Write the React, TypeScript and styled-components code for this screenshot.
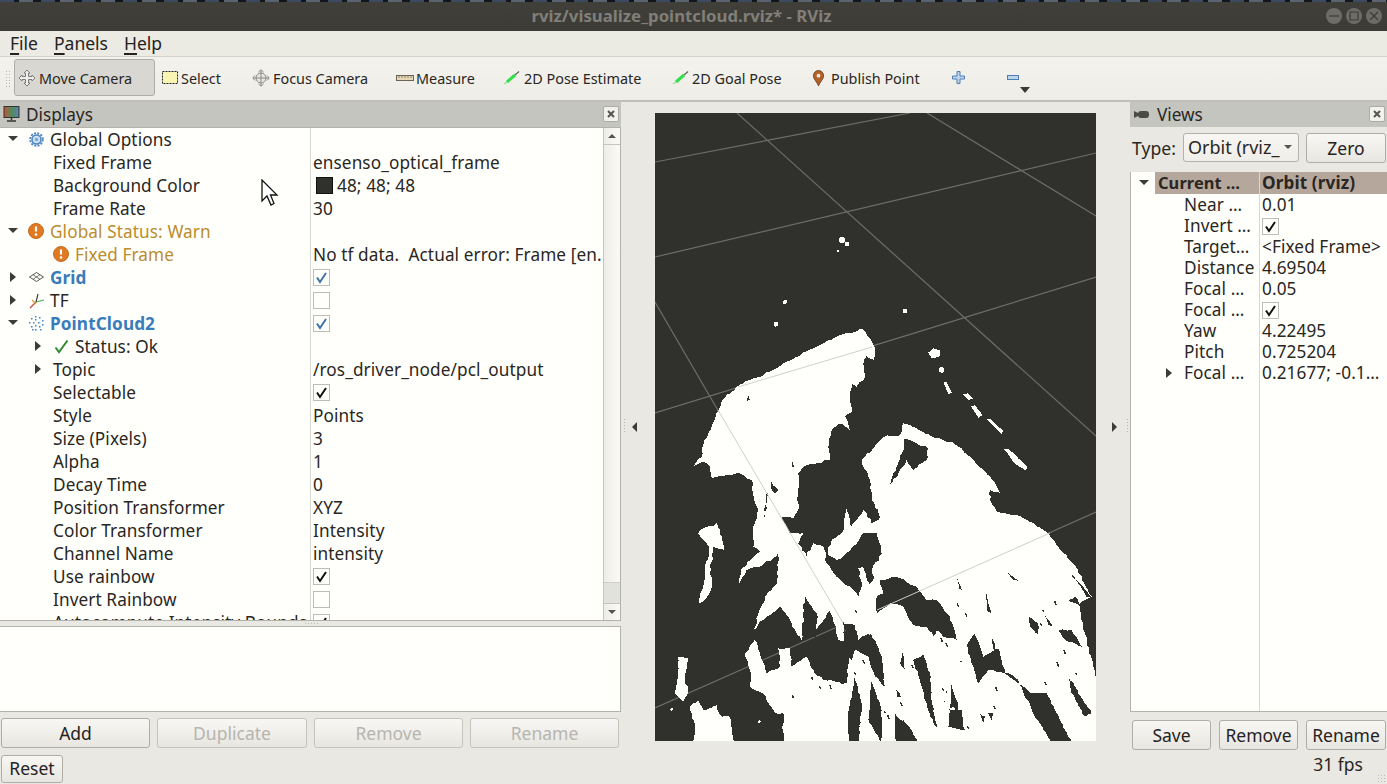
import React from "react";
import styled, { createGlobalStyle } from "styled-components";

const Global = createGlobalStyle`
  html, body { margin: 0; padding: 0; height: 100%; background: #e9e8e2; overflow: hidden; }
  * { box-sizing: border-box; }
  #root { font-family: "Noto Sans", "Open Sans", sans-serif; color: #2a2622; }
`;

const Screen = styled.div`
  position: relative;
  width: 1387px;
  height: 784px;
  display: flex;
  flex-direction: column;
  background: #e9e8e2;
  overflow: hidden;
`;

const TitleBar = styled.div`
  position: relative;
  height: 31px;
  flex: none;
  display: flex;
  align-items: center;
  justify-content: center;
  padding: 2px 24px 2px 0;
  background: linear-gradient(#403f3a, #3c3b36);
  color: #807f79;
  font-size: 16.8px;
  font-weight: 700;
  &::before {
    content: "";
    position: absolute;
    left: 0;
    right: 0;
    top: 0;
    height: 2px;
    background: #12151a repeating-linear-gradient(90deg, #3b4a5e 0 14px, #12151a 14px 19px, #5a6470 19px 33px, #12151a 33px 41px);
  }
`;

const WindowButtons = styled.div`
  position: absolute;
  right: 5px;
  top: 8px;
  display: flex;
  gap: 4px;
`;

const WindowButton = styled.span`
  width: 16px;
  height: 16px;
  border-radius: 50%;
  background: #6d6c67;
  display: flex;
  align-items: center;
  justify-content: center;
`;

const MenuBar = styled.div`
  height: 26px;
  flex: none;
  display: flex;
  align-items: center;
  padding: 0 0 2px 10px;
  gap: 16px;
  background: #ebeae3;
  border-bottom: 1px solid #d3d2cb;
  font-size: 17.5px;
`;

const MenuItem = styled.span`
  color: #26221e;
  u { text-decoration-thickness: 2px; text-underline-offset: 3px; }
`;

const ToolBar = styled.div`
  height: 45px;
  flex: none;
  display: flex;
  align-items: center;
  padding: 0 0 2px 14px;
  position: relative;
  background: linear-gradient(#f3f2ed, #eeede7);
  border-bottom: 2px solid #c0bfb8;
  font-size: 14.4px;
`;

const Grip = styled.span`
  position: absolute;
  left: 5px;
  top: 13px;
  width: 5px;
  height: 19px;
  background-image: radial-gradient(#b8b7b0 0.8px, transparent 1px);
  background-size: 3px 3px;
`;

const Tool = styled.div<{ $w: number; $on?: boolean; $gap: number }>`
  width: ${(p) => p.$w}px;
  height: 37px;
  display: flex;
  align-items: center;
  gap: ${(p) => p.$gap}px;
  padding-left: ${(p) => (p.$on ? 3 : 6)}px;
  white-space: nowrap;
  border-radius: 3px;
  background: ${(p) => (p.$on ? "#d9d7d1" : "transparent")};
  border: ${(p) => (p.$on ? "1px solid #aeada6" : "none")};
  > span { padding-top: 2px; }
`;

const ToolMenuArrow = styled.span`
  position: absolute;
  left: 1020px;
  top: 30px;
  width: 0;
  height: 0;
  border: 5px solid transparent;
  border-top: 6px solid #3a3935;
  border-bottom: none;
`;

const Main = styled.div`
  height: 650px;
  flex: none;
  display: grid;
  grid-template-columns: 621px 509px 257px;
`;

const Panel = styled.section`
  display: flex;
  flex-direction: column;
  min-width: 0;
`;

const PanelTitle = styled.header`
  height: 25px;
  flex: none;
  display: flex;
  align-items: center;
  justify-content: space-between;
  padding: 0 2px 1px 3px;
  background: #c5c5c0;
  font-size: 17.2px;
  color: #2a2622;
`;

const PanelName = styled.span<{ $gap: number }>`
  display: flex;
  align-items: center;
  gap: ${(p) => p.$gap}px;
`;

const CloseBox = styled.span`
  width: 16px;
  height: 16px;
  display: flex;
  align-items: center;
  justify-content: center;
  background: #f2f1ec;
  border: 1px solid #acaba4;
  border-radius: 2px;
`;

const DisplayTree = styled.div`
  height: 494px;
  flex: none;
  display: flex;
  background: #fffffc;
  border: 1px solid #b3b2ab;
  border-left: none;
`;

const DisplayRows = styled.div`
  flex: 1;
  position: relative;
  overflow: hidden;
  font-size: 17.2px;
  line-height: 21px;
  letter-spacing: 0.1px;
  &::after {
    content: "";
    position: absolute;
    left: 310px;
    top: 0;
    bottom: 0;
    width: 1px;
    background: #d8d7d2;
  }
`;

const TreeRow = styled.div<{ $h: number; $name: number }>`
  height: ${(p) => p.$h}px;
  display: grid;
  grid-template-columns: ${(p) => p.$name}px 1fr;
  align-items: center;
  white-space: pre;
  padding-bottom: 1px;
`;

const NameCell = styled.div<{ $depth: number; $color?: string; $bold?: boolean; $base: number; $step: number }>`
  display: flex;
  align-items: center;
  min-width: 0;
  overflow-x: clip;
  padding-left: ${(p) => p.$base + p.$depth * p.$step}px;
  color: ${(p) => p.$color || "inherit"};
  font-weight: ${(p) => (p.$bold ? 700 : 400)};
`;

const Expander = styled.span<{ $kind?: "open" | "closed" }>`
  width: 10px;
  height: 10px;
  flex: none;
  position: relative;
  &::before {
    content: "";
    display: ${(p) => (p.$kind ? "block" : "none")};
    position: absolute;
    width: 0;
    height: 0;
    ${(p) =>
      p.$kind === "open"
        ? `left: 0; top: 2px; border-left: 5px solid transparent; border-right: 5px solid transparent; border-top: 5px solid #3c3b37;`
        : `left: 2px; top: 0; border-top: 5px solid transparent; border-bottom: 5px solid transparent; border-left: 6px solid #3c3b37;`}
  }
`;

const RowIcon = styled.span`
  width: 20px;
  height: 18px;
  margin-left: 8px;
  flex: none;
  display: flex;
  align-items: center;
  justify-content: center;
`;

const RowLabel = styled.span<{ $icon: boolean }>`
  margin-left: ${(p) => (p.$icon ? 4 : 10)}px;
`;

const ValueCell = styled.div`
  display: flex;
  align-items: center;
  padding-left: 3px;
  min-width: 0;
  overflow-x: clip;
`;

const Swatch = styled.span<{ $c: string }>`
  width: 17px;
  height: 17px;
  margin: 0 4px 0 3px;
  background: ${(p) => p.$c};
  border: 1px solid #111;
  flex: none;
`;

const Check = styled.span`
  width: 17px;
  height: 17px;
  margin-top: 1px;
  flex: none;
  display: flex;
  align-items: center;
  justify-content: center;
  background: #fffffc;
  border: 1px solid #bdbcb6;
`;

const ScrollBar = styled.div`
  width: 17px;
  flex: none;
  display: flex;
  flex-direction: column;
  border-left: 1px solid #c5c4be;
  background: linear-gradient(90deg, #eeede8, #fbfaf7);
`;

const ScrollButton = styled.span`
  height: 17px;
  flex: none;
  display: flex;
  align-items: center;
  justify-content: center;
  &:first-child { border-bottom: 1px solid #c5c4be; }
  &:last-child { border-top: 1px solid #c5c4be; }
`;

const ScrollTrack = styled.div`
  flex: 1;
  display: flex;
  flex-direction: column;
  justify-content: flex-end;
`;

const ScrollThumb = styled.div`
  height: 21px;
  background: #e2e2dd;
  border-top: 1px solid #cfcec8;
`;

const Tri = styled.span<{ $up?: boolean }>`
  width: 0;
  height: 0;
  border-left: 4px solid transparent;
  border-right: 4px solid transparent;
  ${(p) => (p.$up ? "border-bottom: 4px solid #55544f;" : "border-top: 4px solid #55544f;")}
`;

const Splitter = styled.div`
  height: 5px;
  flex: none;
  position: relative;
  &::after {
    content: "";
    position: absolute;
    left: 304px;
    top: 1px;
    width: 15px;
    height: 3px;
    background-image: radial-gradient(#bcbbb4 0.7px, transparent 0.9px);
    background-size: 3px 3px;
  }
`;

const HelpBox = styled.div`
  height: 86px;
  flex: none;
  background: #fffffc;
  border: 1px solid #b3b2ab;
  border-left: none;
`;

const ButtonRow = styled.div<{ $pad: string; $gap: number }>`
  display: flex;
  flex: none;
  gap: ${(p) => p.$gap}px;
  padding: ${(p) => p.$pad};
`;

const Button = styled.button<{ $w: number }>`
  width: ${(p) => p.$w}px;
  height: 30px;
  padding: 0 0 1px;
  flex: none;
  font: inherit;
  font-size: 17.5px;
  color: #26221e;
  background: linear-gradient(#f8f7f4, #e7e6e0);
  border: 1px solid #aeada6;
  border-radius: 3px;
  &:disabled {
    color: #b6b5af;
    border-color: #c4c3bc;
  }
`;

const Center = styled.div`
  display: grid;
  grid-template-columns: 34px 441px 34px;
  grid-template-rows: 628px;
  padding-top: 11px;
`;

const SideArrow = styled.div<{ $left?: boolean }>`
  position: relative;
  display: flex;
  align-items: center;
  padding-left: ${(p) => (p.$left ? 11 : 16)}px;
  &::before {
    content: "";
    width: 0;
    height: 0;
    border-top: 5px solid transparent;
    border-bottom: 5px solid transparent;
    ${(p) => (p.$left ? "border-right: 5px solid #3c3b37;" : "border-left: 5px solid #3c3b37;")}
  }
  &::after {
    content: "";
    position: absolute;
    ${(p) => (p.$left ? "left: 2px;" : "right: 1px;")}
    top: 305px;
    width: 3px;
    height: 16px;
    background-image: radial-gradient(#b5b4ad 0.7px, transparent 0.9px);
    background-size: 3px 3px;
  }
`;

const Viewport = styled.div`
  width: 441px;
  height: 628px;
  background: #30302c;
  overflow: hidden;
  svg { display: block; }
`;

const TypeRow = styled.div`
  height: 45px;
  flex: none;
  display: flex;
  align-items: flex-start;
  padding: 6px 1px 0 2px;
  font-size: 17.6px;
`;

const TypeLabel = styled.span`
  width: 51px;
  line-height: 31px;
`;

const Combo = styled.div`
  width: 116px;
  height: 29px;
  display: flex;
  align-items: center;
  justify-content: space-between;
  padding: 0 6px 2px 4px;
  background: linear-gradient(#f7f6f3, #efeee9);
  border: 1px solid #b3b2ab;
  border-radius: 3px;
  margin-right: 7px;
  white-space: nowrap;
  font-size: 18px;
`;

const ViewTree = styled.div`
  height: 540px;
  flex: none;
  position: relative;
  overflow: hidden;
  background: #fffffc;
  border-left: 1px solid #b3b2ab;
  border-bottom: 1px solid #b3b2ab;
  font-size: 17.2px;
  line-height: 20px;
  letter-spacing: 0.1px;
  &::after {
    content: "";
    position: absolute;
    left: 128px;
    top: 0;
    bottom: 0;
    width: 1px;
    background: #d8d7d2;
  }
`;

const HeaderName = styled.span`
  margin-left: 6px;
  flex: 1;
  align-self: stretch;
  display: flex;
  align-items: center;
  padding: 0 0 1px 3px;
  background: #b6a79d;
  font-size: 16.4px;
`;

const HeaderRow = styled.div`
  height: 22px;
  margin-bottom: 1px;
  display: grid;
  grid-template-columns: 128px 1fr;
  font-weight: 700;
  white-space: nowrap;
  > div:first-child { display: flex; align-items: center; padding-left: 8px; }
  > div:last-child { display: flex; align-items: center; padding: 0 0 1px 3px; background: #b6a79d; }
`;

const StatusBar = styled.div`
  height: 32px;
  flex: none;
  position: relative;
  display: flex;
  align-items: center;
  justify-content: space-between;
  padding: 1px 24px 0 1px;
  font-size: 17.5px;
`;

const Fps = styled.span`
  margin-bottom: 10px;
`;

const ResetButton = styled(Button)`
  height: 28px;
`;

const SizeGrip = styled.span`
  position: absolute;
  right: 0;
  bottom: 0;
  width: 10px;
  height: 10px;
  background-image: radial-gradient(#bcbbb4 0.8px, transparent 1px);
  background-size: 3px 3px;
`;

const PointerLayer = styled.svg`
  position: absolute;
  left: 260px;
  top: 179px;
`;

/* ---------- icons ---------- */

const MoveIcon = () => (
  <svg width="18" height="18" viewBox="0 0 18 18" fill="#eee" stroke="#7d7d78" strokeWidth="1">
    <path d="M9 1 L12 4 L10.5 4 L10.5 7.5 L14 7.5 L14 6 L17 9 L14 12 L14 10.5 L10.5 10.5 L10.5 14 L12 14 L9 17 L6 14 L7.5 14 L7.5 10.5 L4 10.5 L4 12 L1 9 L4 6 L4 7.5 L7.5 7.5 L7.5 4 L6 4 Z" />
  </svg>
);
const SelectIcon = () => (
  <svg width="18" height="18" viewBox="0 0 18 18">
    <rect x="1.5" y="2.5" width="15" height="12" fill="#f9f5b4" stroke="#222" strokeDasharray="2 1" />
  </svg>
);
const FocusIcon = () => (
  <svg width="18" height="18" viewBox="0 0 18 18" fill="none" stroke="#8a8a85">
    <circle cx="9" cy="9" r="5" fill="#e6e6e2" />
    <path d="M9 1v16M1 9h16M6.5 3 9 .8 11.5 3M6.5 15 9 17.2 11.5 15M3 6.5.8 9 3 11.5M15 6.5 17.2 9 15 11.5" />
  </svg>
);
const RulerIcon = () => (
  <svg width="18" height="18" viewBox="0 0 18 18">
    <rect x="0.5" y="6.5" width="17" height="5" fill="#e6d8b4" stroke="#6b6355" />
    <path d="M3 7v2M6 7v2M9 7v2M12 7v2M15 7v2" stroke="#8d8068" />
  </svg>
);
const PoseIcon = () => (
  <svg width="18" height="18" viewBox="0 0 18 18" fill="none">
    <path d="M1 15 L4 13" stroke="#9fdca6" strokeWidth="1.5" />
    <path d="M4 13 L12 6" stroke="#2fe04a" strokeWidth="3" />
    <path d="M12 6 L16 2.500" stroke="#5c6b5a" strokeWidth="1.3" />
  </svg>
);
const PinIcon = () => (
  <svg width="13" height="18" viewBox="0 0 14 18">
    <path d="M7 17.5 C5.5 13 1.5 10.5 1.5 6.5 A5.5 5.5 0 0 1 12.5 6.5 C12.5 10.5 8.5 13 7 17.5Z" fill="#b5622a" stroke="#6d4526" />
    <circle cx="7" cy="6.5" r="2" fill="#f2e7dc" />
  </svg>
);
const PlusIcon = () => (
  <svg width="13" height="13" viewBox="0 0 13 13">
    <path d="M5 .5h3v4.500h4.500v3H8v4.500H5V8H.5V5H5Z" fill="#bcd3ea" stroke="#4d7fb5" />
  </svg>
);
const MinusIcon = () => (
  <svg width="13" height="6" viewBox="0 0 13 6">
    <rect x="0.500" y="0.500" width="11" height="4" fill="#bcd3ea" stroke="#4d7fb5" />
  </svg>
);
const MonitorIcon = () => (
  <svg width="18" height="18" viewBox="0 0 18 18">
    <defs>
      <linearGradient id="screen" x1="0" x2="1" y1="0" y2="0">
        <stop offset="0" stopColor="#c2543c" />
        <stop offset="0.5" stopColor="#4f8f54" />
        <stop offset="1" stopColor="#5f7fb5" />
      </linearGradient>
    </defs>
    <rect x="1" y="1.500" width="15" height="11" fill="url(#screen)" stroke="#33332f" />
    <path d="M8.500 13v2M4 16h9" stroke="#33332f" strokeWidth="1.500" />
  </svg>
);
const CameraIcon = () => (
  <svg width="18" height="18" viewBox="0 0 18 18">
    <path d="M1 6 L5 8 L5 11 L1 13Z" fill="#4a4a46" />
    <rect x="5" y="6" width="11" height="7" rx="3" fill="#4a4a46" />
  </svg>
);
const CloseX = () => (
  <svg width="10" height="10" viewBox="0 0 10 10">
    <path d="M2 2 L8 8 M8 2 L2 8" stroke="#55544f" strokeWidth="2" />
  </svg>
);
const GearIcon = () => (
  <svg width="15" height="15" viewBox="0 0 15 15" fill="none">
    <circle cx="7.500" cy="7.500" r="4.500" fill="#cfe0f3" stroke="#4b82bd" strokeWidth="1.500" />
    <circle cx="7.500" cy="7.500" r="6.300" stroke="#4b82bd" strokeWidth="1.800" strokeDasharray="2 1.300" />
    <circle cx="7.500" cy="7.500" r="1.800" fill="#7da7d4" />
  </svg>
);
const WarnIcon = () => (
  <svg width="16" height="16" viewBox="0 0 16 16">
    <circle cx="8" cy="8" r="7.500" fill="#e07a22" stroke="#c9691a" />
    <path d="M8 3.500v5" stroke="#fff" strokeWidth="2.200" />
    <circle cx="8" cy="11.500" r="1.300" fill="#fff" />
  </svg>
);
const GridIcon = () => (
  <svg width="15" height="10" viewBox="0 0 15 10" fill="none" stroke="#55544f">
    <path d="M7.500.5 14.500 5 7.500 9.500.5 5Z" />
    <path d="M4 2.700 11 7.300M11 2.700 4 7.300" strokeWidth="0.800" />
  </svg>
);
const TFIcon = () => (
  <svg width="17" height="17" viewBox="0 0 17 17" fill="none" strokeWidth="1.200">
    <path d="M8 10 L2 16" stroke="#c8492e" />
    <path d="M8 10 L16 8" stroke="#4fa84f" />
    <path d="M8 10 L10 2" stroke="#3d3d3a" />
    <path d="M4 8 L8 12" stroke="#d9a23a" />
  </svg>
);
const CloudIcon = () => (
  <svg width="16" height="16" viewBox="0 0 16 16" fill="#3f83c4">
    {[[7, 1], [11, 2], [3, 3], [7, 4], [14, 5], [1, 7], [5, 7], [10, 7], [14, 9], [3, 11], [7, 10], [11, 11], [7, 14], [12, 14], [4, 14]].map(([x, y]) => (
      <rect key={`${x}-${y}`} x={x} y={y} width="1.500" height="1.500" />
    ))}
  </svg>
);
const OkIcon = () => (
  <svg width="15" height="15" viewBox="0 0 15 15" fill="none">
    <path d="M1.500 8.500 L5 13 L13.500 1.500" stroke="#2e8b2e" strokeWidth="2" />
  </svg>
);
const Tick = ({ color }: { color: string }) => (
  <svg width="13" height="13" viewBox="0 0 13 13" fill="none">
    <path d="M2 6.500 L5 11 L11 2" stroke={color} strokeWidth="2" />
  </svg>
);

/* ---------- point cloud ---------- */

type Pt = number[];

const makeRandom = (seed: number) => {
  let s = seed;
  return () => {
    s = (s * 1664525 + 1013904223) % 4294967296;
    return s / 4294967296;
  };
};

// Frays a traced outline so its edges look like rastered points.
const rough = (pts: Pt[], amp: number, seed: number) => {
  const rnd = makeRandom(seed);
  const out: Pt[] = [];
  pts.forEach((a, i) => {
    const b = pts[(i + 1) % pts.length];
    const n = Math.max(1, Math.round(Math.hypot(b[0] - a[0], b[1] - a[1]) / 12));
    for (let k = 0; k < n; k++) {
      const t = k / n;
      const dx = k === 0 ? 0 : (rnd() - 0.5) * amp;
      const dy = k === 0 ? 0 : (rnd() - 0.5) * amp;
      out.push([a[0] + (b[0] - a[0]) * t + dx, a[1] + (b[1] - a[1]) * t + dy]);
    }
  });
  return "M" + out.map((p) => `${p[0].toFixed(1)} ${p[1].toFixed(1)}`).join("L") + "Z";
};

const mainMass: Pt[] = [
  [132, 438], [155, 410], [160, 375], [185, 320], [205, 270], [222, 235], [260, 200], [300, 180], [370, 150], [440, 110], [500, 80], [580, 42], [640, 28], [660, 55], [675, 95], [672, 120], [650, 108], [640, 130], [645, 170], [620, 200], [605, 190], [600, 230], [608, 270], [585, 290], [600, 330], [570, 310], [545, 330], [535, 380], [540, 420], [500, 430], [460, 440], [445, 460], [445, 570], [430, 595], [395, 590], [420, 640], [460, 640], [445, 670], [470, 710], [490, 670], [520, 680], [530, 710], [545, 660], [575, 640], [590, 565], [605, 620], [640, 570], [665, 610], [685, 600], [690, 590], [665, 540], [660, 480], [635, 420], [680, 370], [705, 350], [750, 345], [760, 310], [800, 325], [860, 355], [905, 365], [960, 410], [1020, 470], [1050, 520], [1020, 510], [1020, 540], [1040, 575], [1100, 585], [1130, 600], [1190, 635], [1230, 690], [1270, 730], [1325, 830], [1290, 850], [1300, 930], [1330, 1040], [1345, 1100], [1345, 1280], [400, 1280], [400, 1180], [375, 1180], [340, 1120], [300, 1100], [300, 1050], [285, 1000], [315, 960], [330, 1000], [350, 1060], [390, 1040], [385, 985], [420, 985], [425, 1040], [470, 1010], [490, 1050], [520, 1080], [590, 1090], [600, 990], [640, 985], [620, 960], [580, 905], [580, 965], [565, 960], [540, 870], [500, 930], [500, 880], [465, 830], [455, 960], [435, 930], [420, 900], [390, 860], [340, 900], [310, 930], [345, 830], [380, 790], [385, 700], [330, 740], [290, 750], [268, 790], [275, 745], [330, 695], [310, 680], [310, 620], [325, 570], [310, 520], [305, 480], [270, 460], [185, 475], [180, 440], [160, 425],
];

const whiteBits: Pt[][] = [
  [[145, 640], [160, 625], [200, 610], [215, 650], [222, 690], [190, 680], [180, 760], [186, 800], [160, 845], [148, 850], [165, 760], [178, 680], [160, 660]],
  [[85, 1010], [115, 1015], [105, 1080], [115, 1110], [100, 1145], [75, 1120], [85, 1060]],
  [[120, 1160], [145, 1140], [160, 1170], [200, 1155], [215, 1190], [240, 1190], [255, 1280], [130, 1280], [135, 1215]],
];

const dashes: Pt[][] = [
  [[880, 186], [890, 186], [905, 218], [895, 222]],
  [[938, 222], [955, 220], [970, 235], [955, 241]],
  [[962, 258], [975, 256], [997, 285], [985, 293]],
  [[1008, 296], [1020, 296], [1060, 332], [1055, 343]],
  [[1063, 388], [1075, 386], [1132, 440], [1128, 451], [1095, 432]],
  [[835, 98], [850, 85], [872, 92], [868, 110], [845, 114]],
];

const darkBits: Pt[][] = [
  [[525, 720], [560, 770], [600, 800], [625, 830], [635, 790], [625, 745], [640, 740], [660, 800], [672, 770], [665, 750], [695, 700], [680, 640], [660, 640], [640, 640], [610, 680], [580, 710], [560, 720], [530, 700]],
  [[690, 780], [740, 770], [800, 800], [830, 840], [860, 840], [900, 890], [920, 960], [880, 950], [860, 930], [850, 950], [830, 920], [790, 915], [760, 860], [720, 850], [680, 880], [680, 830], [700, 820]],
  [[295, 222], [300, 240], [292, 242]],
  [[365, 485], [385, 510], [375, 522], [362, 500]],
  [[350, 520], [355, 520], [345, 590], [342, 590]],
  [[427, 425], [432, 440], [427, 440]],
  [[765, 355], [800, 370], [835, 385], [830, 420], [790, 450], [770, 420], [745, 460], [720, 495], [740, 440], [755, 400]],
];

const darkStreaks: Pt[][] = [
  [[775, 300], [805, 285], [825, 340], [830, 420], [845, 500], [825, 470], [800, 380]],
  [[935, 255], [960, 220], [985, 290], [1030, 265], [1050, 340], [1090, 370], [1130, 400], [1175, 400], [1200, 450], [1250, 550], [1190, 550], [1130, 450], [1090, 360], [1060, 340], [1000, 330], [970, 370], [955, 320]],
  [[880, 450], [920, 450], [930, 510], [880, 500], [890, 400], [905, 430]],
  [[600, 350], [620, 430], [610, 550], [580, 550], [580, 470]],
  [[650, 360], [680, 450], [680, 550], [640, 480]],
  [[720, 460], [770, 510], [790, 550], [720, 550]],
  [[1120, 170], [1150, 190], [1150, 225], [1125, 200]],
  [[1210, 210], [1250, 210], [1280, 260], [1230, 240]],
  [[995, 100], [1010, 160], [995, 150]],
  [[905, 50], [920, 90], [912, 85]],
  [[745, 270], [750, 330], [735, 310]],
  [[565, 190], [600, 195], [610, 240], [640, 220], [660, 240], [680, 290], [690, 380], [660, 350], [640, 290], [600, 270], [590, 300], [575, 280], [580, 240]],
  [[1240, 350], [1310, 460], [1290, 470], [1250, 400]],
  [[975, 460], [990, 470], [985, 490]],
  [[1000, 460], [1015, 460], [1010, 480]],
  [[1240, 120], [1280, 140], [1260, 110]],
  [[1170, 165], [1195, 200], [1180, 195]],
  [[885, 360], [905, 420], [915, 480], [895, 440]],
  [[1010, 225], [1022, 270], [1014, 268]],
  [[1240, 30], [1310, 112], [1296, 112]],
  [[1060, 40], [1090, 62], [1075, 60]],
  [[720, 380], [738, 412], [726, 410]],
];

const specks = (() => {
  const rnd = makeRandom(77);
  return Array.from({ length: 45 }, () => ({
    x: 790 + rnd() * 300,
    y: 600 + rnd() * 130,
    h: 1 + rnd() * 4,
  }));
})();

const PointCloud = () => (
  <svg width="441" height="628" viewBox="655 113 441 628" shapeRendering="crispEdges">
    <g stroke="#6d6d69" strokeWidth="1.200" shapeRendering="auto">
      <path d="M655 162 910 113M655 257 1096 153M655 413 1096 277M655 708 1096 512M737 113 1096 436M927 113 1096 216M655 302 910 741" />
    </g>
    <g transform="translate(650 320) scale(0.33333)" fill="#fffffc">
      <path d={rough(mainMass, 7, 11)} />
      {whiteBits.map((b, i) => (
        <path key={i} d={rough(b, 6, 20 + i)} />
      ))}
      {dashes.map((b, i) => (
        <path key={i} d={rough(b, 1.5, 40 + i)} />
      ))}
      <circle cx="377" cy="14" r="6" />
      <circle cx="875" cy="150" r="8" />
      <circle cx="65" cy="1168" r="4" />
      <circle cx="328" cy="1205" r="4" />
      <g fill="#30302c">
        {darkBits.map((b, i) => (
          <path key={i} d={rough(b, 6, 60 + i)} />
        ))}
      </g>
    </g>
    <g transform="translate(655 560) scale(0.33333)" fill="#30302c">
      {darkStreaks.map((b, i) => (
        <path key={i} d={rough(b, 5, 80 + i)} />
      ))}
    </g>
    <g fill="#30302c">
      {specks.map((s) => (
        <path key={`${s.x}-${s.y}`} d={`M${s.x} ${s.y}l1.500 0l${s.h * 0.4} ${s.h}l-1.500 0Z`} />
      ))}
    </g>
    <g fill="#fffffc">
      {[[842, 240, 3], [847, 244, 2.500], [838, 251, 1.500], [785, 302, 2], [776, 324, 2.500], [905, 311, 2.200]].map(([x, y, r]) => (
        <circle key={`${x}-${y}`} cx={x} cy={y} r={r} />
      ))}
    </g>
    <path d="M738 387 872 347M718 410 843 623M877 610 1050 533" stroke="#cfcfca" strokeWidth="1" fill="none" shapeRendering="auto" />
  </svg>
);

/* ---------- data ---------- */

type DisplayRow = {
  name: string;
  depth: number;
  exp?: "open" | "closed";
  icon?: React.ReactNode;
  color?: string;
  bold?: boolean;
  value?: string;
  swatch?: string;
  check?: "blue" | "black" | "none";
};

const WARN = "#bb8c2c";
const BLUE = "#3a7cba";

const displayRows: DisplayRow[] = [
  { name: "Global Options", depth: 0, exp: "open", icon: <GearIcon /> },
  { name: "Fixed Frame", depth: 1, value: "ensenso_optical_frame" },
  { name: "Background Color", depth: 1, value: "48; 48; 48", swatch: "#30302c" },
  { name: "Frame Rate", depth: 1, value: "30" },
  { name: "Global Status: Warn", depth: 0, exp: "open", icon: <WarnIcon />, color: WARN },
  { name: "Fixed Frame", depth: 1, icon: <WarnIcon />, color: WARN, value: "No tf data.  Actual error: Frame [en." },
  { name: "Grid", depth: 0, exp: "closed", icon: <GridIcon />, color: BLUE, bold: true, check: "blue" },
  { name: "TF", depth: 0, exp: "closed", icon: <TFIcon />, check: "none" },
  { name: "PointCloud2", depth: 0, exp: "open", icon: <CloudIcon />, color: BLUE, bold: true, check: "blue" },
  { name: "Status: Ok", depth: 1, exp: "closed", icon: <OkIcon /> },
  { name: "Topic", depth: 1, exp: "closed", value: "/ros_driver_node/pcl_output" },
  { name: "Selectable", depth: 1, check: "black" },
  { name: "Style", depth: 1, value: "Points" },
  { name: "Size (Pixels)", depth: 1, value: "3" },
  { name: "Alpha", depth: 1, value: "1" },
  { name: "Decay Time", depth: 1, value: "0" },
  { name: "Position Transformer", depth: 1, value: "XYZ" },
  { name: "Color Transformer", depth: 1, value: "Intensity" },
  { name: "Channel Name", depth: 1, value: "intensity" },
  { name: "Use rainbow", depth: 1, check: "black" },
  { name: "Invert Rainbow", depth: 1, check: "none" },
  { name: "Autocompute Intensity Bounds", depth: 1, check: "black" },
];

const viewRows: DisplayRow[] = [
  { name: "Near …", depth: 1, value: "0.01" },
  { name: "Invert …", depth: 1, check: "black" },
  { name: "Target…", depth: 1, value: "<Fixed Frame>" },
  { name: "Distance", depth: 1, value: "4.69504" },
  { name: "Focal …", depth: 1, value: "0.05" },
  { name: "Focal …", depth: 1, check: "black" },
  { name: "Yaw", depth: 1, value: "4.22495" },
  { name: "Pitch", depth: 1, value: "0.725204" },
  { name: "Focal …", depth: 1, exp: "closed", value: "0.21677; -0.1…" },
];

const tools = [
  { label: "Move Camera", w: 141, on: true, gap: 3, icon: <MoveIcon /> },
  { label: "Select", w: 91, gap: 2, icon: <SelectIcon /> },
  { label: "Focus Camera", w: 144, gap: 3, icon: <FocusIcon /> },
  { label: "Measure", w: 107, gap: 2, icon: <RulerIcon /> },
  { label: "2D Pose Estimate", w: 169, gap: 3, icon: <PoseIcon /> },
  { label: "2D Goal Pose", w: 140, gap: 2, icon: <PoseIcon /> },
  { label: "Publish Point", w: 140, gap: 6, icon: <PinIcon /> },
  { label: "", w: 55, gap: 0, icon: <PlusIcon /> },
  { label: "", w: 30, gap: 0, icon: <MinusIcon /> },
];

const Row = ({ row, h, name, base, step }: { row: DisplayRow; h: number; name: number; base: number; step: number }) => (
  <TreeRow $h={h} $name={name}>
    <NameCell $depth={row.depth} $color={row.color} $bold={row.bold} $base={base} $step={step}>
      <Expander $kind={row.exp} />
      {row.icon && <RowIcon>{row.icon}</RowIcon>}
      <RowLabel $icon={!!row.icon}>{row.name}</RowLabel>
    </NameCell>
    <ValueCell>
      {row.swatch && <Swatch $c={row.swatch} />}
      {row.check && (
        <Check>{row.check !== "none" && <Tick color={row.check === "blue" ? "#3f73a8" : "#111"} />}</Check>
      )}
      {row.value}
    </ValueCell>
  </TreeRow>
);

export default function App() {
  return (
    <Screen>
      <Global />
      <TitleBar>
        rviz/visualize_pointcloud.rviz* - RViz
        <WindowButtons>
          {["M3 8h10", "M4 4h8v8H4Z", "M4 4l8 8M12 4l-8 8"].map((d) => (
            <WindowButton key={d}>
              <svg width="16" height="16" viewBox="0 0 16 16" fill="none" stroke="#3c3b37" strokeWidth="1.200">
                <path d={d} />
              </svg>
            </WindowButton>
          ))}
        </WindowButtons>
      </TitleBar>
      <MenuBar>
        <MenuItem><u>F</u>ile</MenuItem>
        <MenuItem><u>P</u>anels</MenuItem>
        <MenuItem><u>H</u>elp</MenuItem>
      </MenuBar>
      <ToolBar>
        <Grip />
        {tools.map((t, i) => (
          <Tool key={i} $w={t.w} $on={t.on} $gap={t.gap}>
            {t.icon}
            {t.label && <span>{t.label}</span>}
          </Tool>
        ))}
        <ToolMenuArrow />
      </ToolBar>
      <Main>
        <Panel>
          <PanelTitle>
            <PanelName $gap={5}><MonitorIcon />Displays</PanelName>
            <CloseBox><CloseX /></CloseBox>
          </PanelTitle>
          <DisplayTree>
            <DisplayRows>
              {displayRows.map((r, i) => (
                <Row key={i} row={r} h={23} name={310} base={8} step={25} />
              ))}
            </DisplayRows>
            <ScrollBar>
              <ScrollButton><Tri $up /></ScrollButton>
              <ScrollTrack><ScrollThumb /></ScrollTrack>
              <ScrollButton><Tri /></ScrollButton>
            </ScrollBar>
          </DisplayTree>
          <Splitter />
          <HelpBox />
          <ButtonRow $pad="6px 0 0 1px" $gap={7}>
            <Button $w={149}>Add</Button>
            <Button $w={150} disabled>Duplicate</Button>
            <Button $w={149} disabled>Remove</Button>
            <Button $w={149} disabled>Rename</Button>
          </ButtonRow>
        </Panel>
        <Center>
          <SideArrow $left />
          <Viewport><PointCloud /></Viewport>
          <SideArrow />
        </Center>
        <Panel>
          <PanelTitle>
            <PanelName $gap={6}><CameraIcon />Views</PanelName>
            <CloseBox><CloseX /></CloseBox>
          </PanelTitle>
          <TypeRow>
            <TypeLabel>Type:</TypeLabel>
            <Combo>Orbit (rviz_<Tri /></Combo>
            <Button $w={80}>Zero</Button>
          </TypeRow>
          <ViewTree>
            <HeaderRow>
              <div><Expander $kind="open" /><HeaderName>Current …</HeaderName></div>
              <div>Orbit (rviz)</div>
            </HeaderRow>
            {viewRows.map((r, i) => (
              <Row key={i} row={r} h={21} name={128} base={8} step={25} />
            ))}
          </ViewTree>
          <ButtonRow $pad="8px 1px 0 2px" $gap={8}>
            <Button $w={79}>Save</Button>
            <Button $w={79}>Remove</Button>
            <Button $w={80}>Rename</Button>
          </ButtonRow>
        </Panel>
      </Main>
      <StatusBar>
        <ResetButton $w={62}>Reset</ResetButton>
        <Fps>31 fps</Fps>
        <SizeGrip />
      </StatusBar>
      <PointerLayer width="20" height="28" viewBox="0 0 20 28">
        <path d="M2 1 L2 22 L7 17 L11 26 L14 24.500 L10.500 16 L17 16 Z" fill="#fff" stroke="#111" strokeWidth="1.300" />
      </PointerLayer>
    </Screen>
  );
}
